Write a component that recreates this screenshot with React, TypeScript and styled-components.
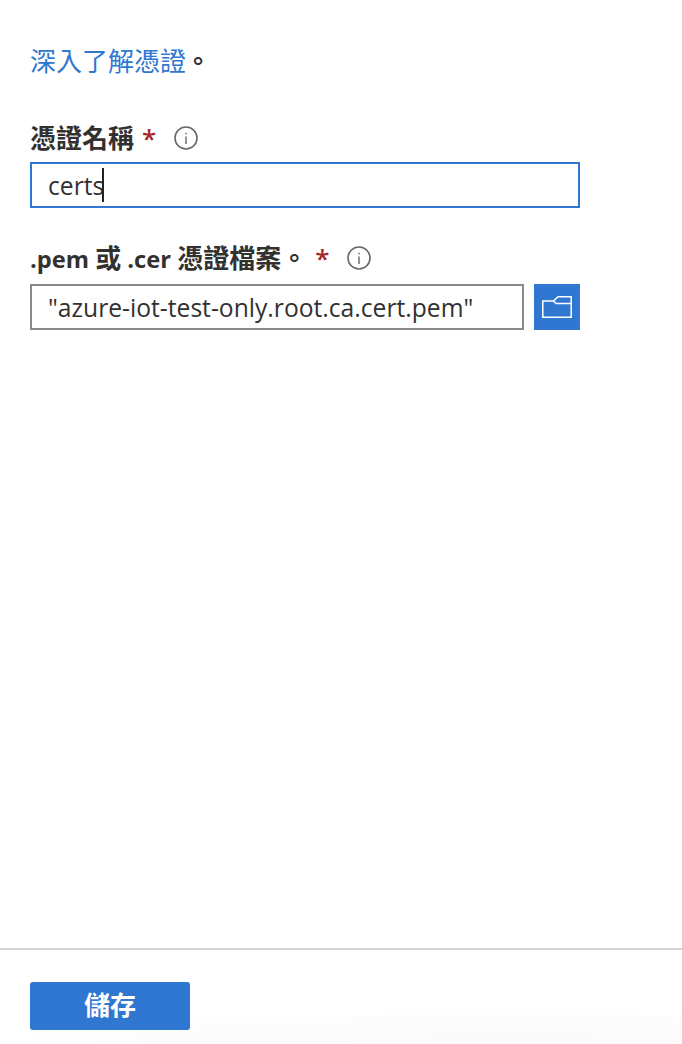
import React from "react";
import styled, { createGlobalStyle } from "styled-components";

const Global = createGlobalStyle`
  html, body { margin: 0; padding: 0; background: #fff; }
  body { font-family: "Open Sans", "Noto Sans CJK TC", sans-serif; color: #323130; }
`;

const Page = styled.div`
  width: 682px;
  height: 1044px;
  display: flex;
  flex-direction: column;
  overflow: hidden;
  background: #fff;
`;

const Content = styled.main`
  flex: 1;
  padding: 43px 102px 0 30px;
  display: flex;
  flex-direction: column;
`;

const Intro = styled.p`
  margin: 0 0 39px;
  font-size: 26px;
  line-height: 36px;
  height: 36px;
`;

const Link = styled.a`
  color: #2f77d0;
  text-decoration: none;
`;

const Period = styled.span`
  font-weight: 700;
  margin-left: -1px;
`;

const Field = styled.section`
  display: flex;
  flex-direction: column;
  margin-bottom: 30px;
`;

const LabelRow = styled.div<{ $gap: number }>`
  display: flex;
  align-items: center;
  height: 40px;
  margin-bottom: ${(p) => p.$gap}px;
`;

const Label = styled.label`
  font-weight: 700;
  font-size: 26px;
  line-height: 40px;
  white-space: pre;
`;

const Latin = styled.span`
  font-size: 23.7px;
  font-weight: 700;
`;

const Star = styled.span`
  color: #a4262c;
  font-size: 26px;
  font-weight: 600;
  line-height: 40px;
  margin-left: 8px;
  width: 13px;
`;

const Info = styled.svg`
  width: 24px;
  height: 24px;
  margin-left: 19px;
  flex: none;
`;

const InputRow = styled.div`
  display: flex;
  gap: 10px;
`;

const InputBox = styled.div<{ $focused?: boolean }>`
  flex: 1;
  box-sizing: border-box;
  height: 46px;
  border: 2px solid ${(p) => (p.$focused ? "#2f77d0" : "#8a8a8a")};
  padding: 0 16px;
  display: flex;
  align-items: center;
  font-size: 24.65px;
  color: #323130;
  white-space: nowrap;
`;

const Caret = styled.span`
  width: 2px;
  height: 34px;
  margin-left: -2px;
  background: #222;
  flex: none;
`;

const BrowseButton = styled.button`
  width: 46px;
  height: 46px;
  border: none;
  padding: 0;
  background: #2f77d0;
  display: flex;
  align-items: center;
  justify-content: center;
`;

const Footer = styled.footer`
  border-top: 2px solid #d4d4d4;
  height: 96px;
  padding: 32px 30px 0;
  box-sizing: border-box;
  flex: none;
  background: radial-gradient(ellipse 520px 34px at 75% 100%, #fafafa 0%, #fcfcfc 70%, #fff 100%);
`;

const SaveButton = styled.button`
  width: 160px;
  height: 48px;
  border: none;
  border-radius: 3px;
  background: #2f77d0;
  color: #fff;
  font-family: "Open Sans", "Noto Sans CJK TC", sans-serif;
  font-size: 26px;
  font-weight: 700;
  padding: 0 0 4px;
`;

const InfoIcon = () => (
  <Info viewBox="0 0 24 24" fill="none">
    <circle cx="12" cy="12" r="11" stroke="#666" strokeWidth="1.6" />
    <rect x="11.3" y="10.5" width="1.4" height="7.5" fill="#666" />
    <rect x="11.3" y="6.8" width="1.4" height="1.6" fill="#666" />
  </Info>
);

export default function App() {
  return (
    <Page>
      <Global />
      <Content>
        <Intro>
          <Link href="#">深入了解憑證</Link>
          <Period>。</Period>
        </Intro>
        <Field>
          <LabelRow $gap={4}>
            <Label>憑證名稱</Label>
            <Star>*</Star>
            <InfoIcon />
          </LabelRow>
          <InputRow>
            <InputBox $focused>
              certs
              <Caret />
            </InputBox>
          </InputRow>
        </Field>
        <Field>
          <LabelRow $gap={6}>
            <Label>
              <Latin>.pem </Latin>或<Latin> .cer </Latin>憑證檔案。
            </Label>
            <Star>*</Star>
            <InfoIcon />
          </LabelRow>
          <InputRow>
            <InputBox>"azure-iot-test-only.root.ca.cert.pem"</InputBox>
            <BrowseButton aria-label="browse">
              <svg width="30" height="22" viewBox="0 0 30 22" fill="none" stroke="#fff" strokeWidth="1.5">
                <path d="M.8 5H11.5L16 .8H29.2V21.2H.8Z" />
                <path d="M11.5 5L14 7.5H29.2" />
              </svg>
            </BrowseButton>
          </InputRow>
        </Field>
      </Content>
      <Footer>
        <SaveButton>儲存</SaveButton>
      </Footer>
    </Page>
  );
}
